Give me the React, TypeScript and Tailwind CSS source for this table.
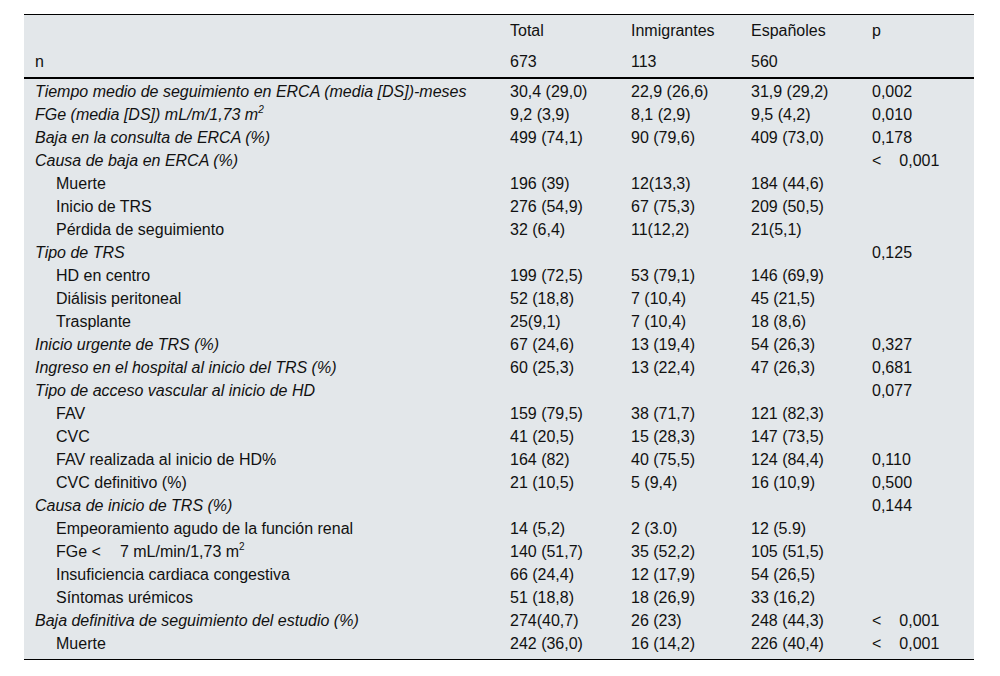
type Row = {
  label: string;
  sup?: string;
  lt?: boolean;
  sub?: boolean;
  italic?: boolean;
  total?: string;
  inm?: string;
  esp?: string;
  p?: string;
  pLt?: boolean;
};

const rows: Row[] = [
  { label: "Tiempo medio de seguimiento en ERCA (media [DS])-meses", italic: true, total: "30,4 (29,0)", inm: "22,9 (26,6)", esp: "31,9 (29,2)", p: "0,002" },
  { label: "FGe (media [DS]) mL/m/1,73 m", sup: "2", italic: true, total: "9,2 (3,9)", inm: "8,1 (2,9)", esp: "9,5 (4,2)", p: "0,010" },
  { label: "Baja en la consulta de ERCA (%)", italic: true, total: "499 (74,1)", inm: "90 (79,6)", esp: "409 (73,0)", p: "0,178" },
  { label: "Causa de baja en ERCA (%)", italic: true, p: "0,001", pLt: true },
  { label: "Muerte", sub: true, total: "196 (39)", inm: "12(13,3)", esp: "184 (44,6)" },
  { label: "Inicio de TRS", sub: true, total: "276 (54,9)", inm: "67 (75,3)", esp: "209 (50,5)" },
  { label: "Pérdida de seguimiento", sub: true, total: "32 (6,4)", inm: "11(12,2)", esp: "21(5,1)" },
  { label: "Tipo de TRS", italic: true, p: "0,125" },
  { label: "HD en centro", sub: true, total: "199 (72,5)", inm: "53 (79,1)", esp: "146 (69,9)" },
  { label: "Diálisis peritoneal", sub: true, total: "52 (18,8)", inm: "7 (10,4)", esp: "45 (21,5)" },
  { label: "Trasplante", sub: true, total: "25(9,1)", inm: "7 (10,4)", esp: "18 (8,6)" },
  { label: "Inicio urgente de TRS (%)", italic: true, total: "67 (24,6)", inm: "13 (19,4)", esp: "54 (26,3)", p: "0,327" },
  { label: "Ingreso en el hospital al inicio del TRS (%)", italic: true, total: "60 (25,3)", inm: "13 (22,4)", esp: "47 (26,3)", p: "0,681" },
  { label: "Tipo de acceso vascular al inicio de HD", italic: true, p: "0,077" },
  { label: "FAV", sub: true, total: "159 (79,5)", inm: "38 (71,7)", esp: "121 (82,3)" },
  { label: "CVC", sub: true, total: "41 (20,5)", inm: "15 (28,3)", esp: "147 (73,5)" },
  { label: "FAV realizada al inicio de HD%", sub: true, total: "164 (82)", inm: "40 (75,5)", esp: "124 (84,4)", p: "0,110" },
  { label: "CVC definitivo (%)", sub: true, total: "21 (10,5)", inm: "5 (9,4)", esp: "16 (10,9)", p: "0,500" },
  { label: "Causa de inicio de TRS (%)", italic: true, p: "0,144" },
  { label: "Empeoramiento agudo de la función renal", sub: true, total: "14 (5,2)", inm: "2 (3.0)", esp: "12 (5.9)" },
  { label: "FGe", lt: true, sup: "2", sub: true, total: "140 (51,7)", inm: "35 (52,2)", esp: "105 (51,5)" },
  { label: "Insuficiencia cardiaca congestiva", sub: true, total: "66 (24,4)", inm: "12 (17,9)", esp: "54 (26,5)" },
  { label: "Síntomas urémicos", sub: true, total: "51 (18,8)", inm: "18 (26,9)", esp: "33 (16,2)" },
  { label: "Baja definitiva de seguimiento del estudio (%)", italic: true, total: "274(40,7)", inm: "26 (23)", esp: "248 (44,3)", p: "0,001", pLt: true },
  { label: "Muerte", sub: true, total: "242 (36,0)", inm: "16 (14,2)", esp: "226 (40,4)", p: "0,001", pLt: true },
];

const grid = "grid grid-cols-[476px_121px_120px_121px_1fr]";

const Sup = ({ v }: { v?: string }) => (
  <sup className="text-[10px] relative -top-[7px]">{v}</sup>
);

const Label = ({ r }: { r: Row }) => {
  if (r.lt) {
    return (
      <span>
        FGe &lt;<span className="inline-block w-[19px]" />7 mL/min/1,73 m
        <Sup v={r.sup} />
      </span>
    );
  }
  return (
    <span>
      {r.label}
      {r.sup && <Sup v={r.sup} />}
    </span>
  );
};

export default function App() {
  return (
    <div className="min-h-screen bg-white pt-[14px] pl-[24px] text-[16px] text-[#111] font-['Liberation_Sans',Arial,sans-serif]">
      <div className="w-[950px] bg-[#e3e7ea] border-t border-black border-b">
        {/* HEADER */}
        <div className={`${grid} leading-[31px]`}>
          <div />
          <div className="pl-[10px]">Total</div>
          <div className="pl-[10px]">Inmigrantes</div>
          <div className="pl-[10px]">Españoles</div>
          <div className="pl-[10px]">p</div>
        </div>
        <div className={`${grid} leading-[31px] border-b-2 border-black`}>
          <div className="pl-[11px]">n</div>
          <div className="pl-[10px]">673</div>
          <div className="pl-[10px]">113</div>
          <div className="pl-[10px]">560</div>
          <div />
        </div>

        {/* BODY */}
        <div className="pt-[1px] pb-[4px]">
          {rows.map((r, i) => (
            <div key={i} className={`${grid} leading-[23px]`}>
              <div className={r.sub ? "pl-[32px]" : `pl-[11px] ${r.italic ? "italic" : ""}`}>
                <Label r={r} />
              </div>
              <div className="pl-[10px]">{r.total}</div>
              <div className="pl-[10px]">{r.inm}</div>
              <div className="pl-[10px]">{r.esp}</div>
              <div className="pl-[10px]">
                {r.pLt ? (
                  <span>
                    &lt;<span className="inline-block w-[18px]" />
                    {r.p}
                  </span>
                ) : (
                  r.p
                )}
              </div>
            </div>
          ))}
        </div>
      </div>
    </div>
  );
}
